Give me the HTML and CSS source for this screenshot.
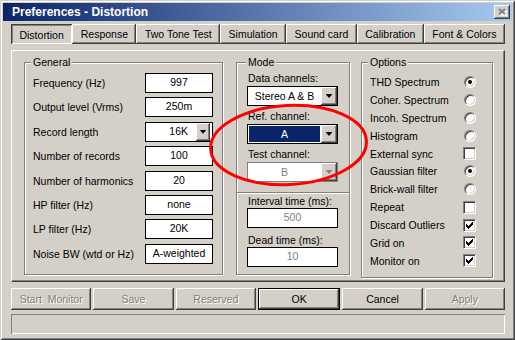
FILE: index.html
```html
<!DOCTYPE html>
<html lang="en">
  <head>
    <meta charset="UTF-8" />
    <title>Preferences - Distortion</title>
    <link rel="stylesheet" href="styles.css">
  </head>

  <body>
    <div class="window">
      <div class="titlebar">
        <span class="title">Preferences - Distortion</span>
        <span class="close-btn">
          <svg width="10" height="9" viewBox="0 0 10 9">
            <path d="M2 2l6 5M8 2l-6 5" stroke="#fff" stroke-width="2" transform="translate(1 1)" />
            <path d="M1 1l6 5M7 1l-6 5" stroke="#808080" stroke-width="2" />
          </svg>
        </span>
      </div>

      <div class="content">
        <div class="tabs">
          <div class="tab active">Distortion</div>
          <div class="tab">Response</div>
          <div class="tab">Two Tone Test</div>
          <div class="tab">Simulation</div>
          <div class="tab">Sound card</div>
          <div class="tab">Calibration</div>
          <div class="tab">Font &amp; Colors</div>
        </div>

        <div class="panel">
          <!-- general settings -->
          <div class="group general">
            <div class="group-title">General</div>
            <div class="form-rows">
              <span>Frequency (Hz)</span>
              <div class="field">997</div>
              <span>Output level (Vrms)</span>
              <div class="field">250m</div>
              <span>Record length</span>
              <div class="field small-combo">
                <span class="combo-text">16K</span>
                <span class="drop-btn"><i class="arrow"></i></span>
              </div>
              <span>Number of records</span>
              <div class="field">100</div>
              <span>Number of harmonics</span>
              <div class="field">20</div>
              <span>HP filter (Hz)</span>
              <div class="field">none</div>
              <span>LP filter (Hz)</span>
              <div class="field">20K</div>
              <span>Noise BW (wtd or Hz)</span>
              <div class="field">A-weighted</div>
            </div>
          </div>

          <!-- mode -->
          <div class="group mode">
            <div class="group-title">Mode</div>
            <div class="mode-top">
              <div class="mode-label">Data channels:</div>
              <div class="combo">
                <span class="combo-value">Stereo A &amp; B</span>
                <span class="drop-btn"><i class="arrow"></i></span>
              </div>
              <div class="mode-label">Ref. channel:</div>
              <div class="combo">
                <span class="combo-value selected">A</span>
                <span class="drop-btn"><i class="arrow"></i></span>
              </div>
              <div class="mode-label">Test channel:</div>
              <div class="combo disabled">
                <span class="combo-value">B</span>
                <span class="drop-btn"><i class="arrow"></i></span>
              </div>
            </div>
            <div class="separator"></div>
            <div class="mode-bottom">
              <div class="mode-label">Interval time (ms):</div>
              <div class="field disabled">500</div>
              <div class="mode-label spaced">Dead time (ms):</div>
              <div class="field disabled">10</div>
            </div>
          </div>

          <!-- options -->
          <div class="group options">
            <div class="group-title">Options</div>
            <div class="option-rows">
              <span>THD Spectrum</span><span class="radio checked"></span>
              <span>Coher. Spectrum</span><span class="radio"></span>
              <span>Incoh. Spectrum</span><span class="radio"></span>
              <span>Histogram</span><span class="radio"></span>
              <span>External sync</span><span class="check"></span>
              <span>Gaussian filter</span><span class="radio checked"></span>
              <span>Brick-wall filter</span><span class="radio"></span>
              <span>Repeat</span><span class="check"></span>
              <span>Discard Outliers</span><span class="check"><svg width="7" height="7" viewBox="0 0 7 7"><path d="M6 0h1v1h-1zM5 1h2v1h-2zM0 2h1v1h-1zM4 2h3v1h-3zM0 3h2v1h-2zM3 3h3v1h-3zM0 4h5v1h-5zM1 5h3v1h-3zM2 6h1v1h-1z" /></svg></span>
              <span>Grid on</span><span class="check"><svg width="7" height="7" viewBox="0 0 7 7"><path d="M6 0h1v1h-1zM5 1h2v1h-2zM0 2h1v1h-1zM4 2h3v1h-3zM0 3h2v1h-2zM3 3h3v1h-3zM0 4h5v1h-5zM1 5h3v1h-3zM2 6h1v1h-1z" /></svg></span>
              <span>Monitor on</span><span class="check"><svg width="7" height="7" viewBox="0 0 7 7"><path d="M6 0h1v1h-1zM5 1h2v1h-2zM0 2h1v1h-1zM4 2h3v1h-3zM0 3h2v1h-2zM3 3h3v1h-3zM0 4h5v1h-5zM1 5h3v1h-3zM2 6h1v1h-1z" /></svg></span>
            </div>
          </div>
        </div>

        <div class="buttons">
          <div class="btn disabled">Start&nbsp; Monitor</div>
          <div class="btn disabled">Save</div>
          <div class="btn disabled">Reserved</div>
          <div class="btn default">OK</div>
          <div class="btn">Cancel</div>
          <div class="btn disabled">Apply</div>
        </div>

        <div class="status"></div>
      </div>

      <svg class="highlight" width="515" height="340" viewBox="0 0 515 340">
        <ellipse cx="288.5" cy="145" rx="78" ry="39.5" fill="none" stroke="#f00" stroke-width="3" transform="rotate(-3 288.5 145)" />
      </svg>
    </div>
  </body>
</html>
```

FILE: styles.css
```css
* {
  box-sizing: border-box;
  margin: 0;
  padding: 0;
}
body {
  background: #d4d0c8;
  font-family: "Liberation Sans", Arial, sans-serif;
  font-size: 10.5px;
  color: #000;
}
.window {
  position: relative;
  width: 515px;
  height: 340px;
  padding: 3px;
  background: #d4d0c8;
  box-shadow: inset 1px 1px #d4d0c8, inset -1px -1px #404040, inset 2px 2px #fff,
    inset -2px -2px #808080;
}

/* title bar */
.titlebar {
  height: 18px;
  display: flex;
  align-items: center;
  justify-content: space-between;
  padding: 0 2px 0 9px;
  background: linear-gradient(to right, #0a246a, #a6caf0);
}
.title {
  color: #fff;
  font-weight: bold;
  font-size: 12px;
}
.close-btn {
  width: 16px;
  height: 14px;
  display: flex;
  align-items: center;
  justify-content: center;
  padding-left: 1px;
  background: #d4d0c8;
  box-shadow: inset -1px -1px #404040, inset 1px 1px #fff, inset -2px -2px #808080;
}

.content {
  padding: 3px 7px 0 8px;
}

/* tabs */
.tabs {
  display: flex;
  height: 20px;
}
.tab {
  flex: 1 1 auto;
  display: flex;
  align-items: center;
  justify-content: center;
  box-shadow: inset -1px -1px #404040, inset 1px 1px #fff, inset -2px -2px #808080;
}
.tab.active {
  box-shadow: inset 1px 1px #404040, inset -1px -1px #fff, inset 2px 2px #808080;
  padding-top: 1px;
}

/* tab page */
.panel {
  display: flex;
  height: 232px;
  margin-top: 6px;
  padding: 11px 0 6px 12px;
  border-top: 1px solid #fff;
  border-left: 1px solid #fff;
  border-right: 1px solid #404040;
  border-bottom: 1px solid #404040;
  box-shadow: inset -1px -1px #808080;
}
.group {
  border: 1px solid #808080;
  box-shadow: inset 1px 1px #fff, 1px 1px #fff;
}
.group-title {
  width: fit-content;
  margin: -7px 0 0 6px;
  padding: 0 2px;
  line-height: 13px;
  background: #d4d0c8;
}
.general {
  width: 199px;
}
.mode {
  width: 114px;
  margin-left: 13px;
}
.mode .group-title {
  margin-left: 9px;
}
.options {
  width: 132px;
  margin-left: 11px;
  margin-bottom: -3px;
}

/* general */
.form-rows {
  display: grid;
  grid-template-columns: 1fr 68px;
  grid-auto-rows: 20px;
  row-gap: 4.4px;
  align-items: center;
  margin-top: 4px;
  padding: 0 9px 0 8px;
}
.field {
  height: 20px;
  display: flex;
  align-items: center;
  justify-content: center;
  padding-bottom: 2px;
  border: 1px solid #000;
  background: #fff;
}
.field.disabled {
  color: #808080;
}
.small-combo {
  padding-bottom: 0;
}
.small-combo .combo-text {
  flex: 1;
  text-align: right;
  padding: 0 8px 2px 0;
}
.drop-btn {
  display: flex;
  align-items: center;
  justify-content: center;
  background: #d4d0c8;
  box-shadow: inset -1px -1px #404040, inset 1px 1px #fff, inset -2px -2px #808080;
}
.small-combo .drop-btn {
  width: 14px;
  height: 18px;
  margin-right: 2px;
}
.arrow {
  width: 7px;
  height: 4px;
  background: #000;
  clip-path: polygon(0 0, 100% 0, 50% 100%);
}

/* mode */
.mode-top,
.mode-bottom {
  padding: 0 11px 0 10px;
}
.mode-top {
  margin-top: 3px;
}
.mode-bottom {
  margin-top: 1px;
}
.mode-label {
  line-height: 13px;
  margin-left: 1px;
}
.mode-top .mode-label {
  margin-bottom: 1px;
}
.mode-label.spaced {
  margin-top: 6px;
}
.combo {
  height: 20px;
  display: flex;
  margin-bottom: 4px;
  border: 1px solid #000;
  background: #fff;
}
.combo:last-child {
  margin-bottom: 0;
}
.combo-value {
  flex: 1;
  display: flex;
  align-items: center;
  justify-content: center;
  margin: 1px;
  padding-bottom: 1px;
}
.combo-value.selected {
  background: #0a246a;
  color: #fff;
}
.combo .drop-btn {
  width: 16px;
}
.combo.disabled {
  border-color: #808080;
  color: #808080;
}
.combo.disabled .arrow {
  background: #808080;
}
.separator {
  height: 2px;
  margin-top: 10px;
  border-top: 1px solid #808080;
  border-bottom: 1px solid #fff;
}

/* options */
.option-rows {
  display: grid;
  grid-template-columns: 1fr 13px;
  grid-auto-rows: 17.9px;
  align-items: center;
  margin-top: 4px;
  padding: 0 16px 0 8px;
}
.radio,
.check {
  justify-self: end;
  display: flex;
  align-items: center;
  justify-content: center;
  background: #fff;
  border: 1px solid;
  border-color: #808080 #fff #fff #808080;
  box-shadow: inset 1px 1px #404040, inset -1px -1px #d4d0c8;
}
.radio {
  width: 12px;
  height: 12px;
  border-radius: 50%;
}
.radio.checked::after {
  content: "";
  width: 4px;
  height: 4px;
  border-radius: 50%;
  background: #000;
}
.check {
  width: 13px;
  height: 13px;
}

/* bottom buttons */
.buttons {
  display: flex;
  gap: 2px;
  height: 22px;
  margin-top: 6px;
}
.btn {
  flex: 1;
  display: flex;
  align-items: center;
  justify-content: center;
  box-shadow: inset -1px -1px #404040, inset 1px 1px #fff, inset -2px -2px #808080;
}
.btn.disabled {
  color: #808080;
  text-shadow: 1px 1px #fff;
}
.btn.default {
  border: 1px solid #000;
}
.status {
  height: 20px;
  margin-top: 4px;
  box-shadow: inset 1px 1px #808080, inset -1px -1px #fff;
}

.highlight {
  position: absolute;
  left: 0;
  top: 0;
  pointer-events: none;
}
```
